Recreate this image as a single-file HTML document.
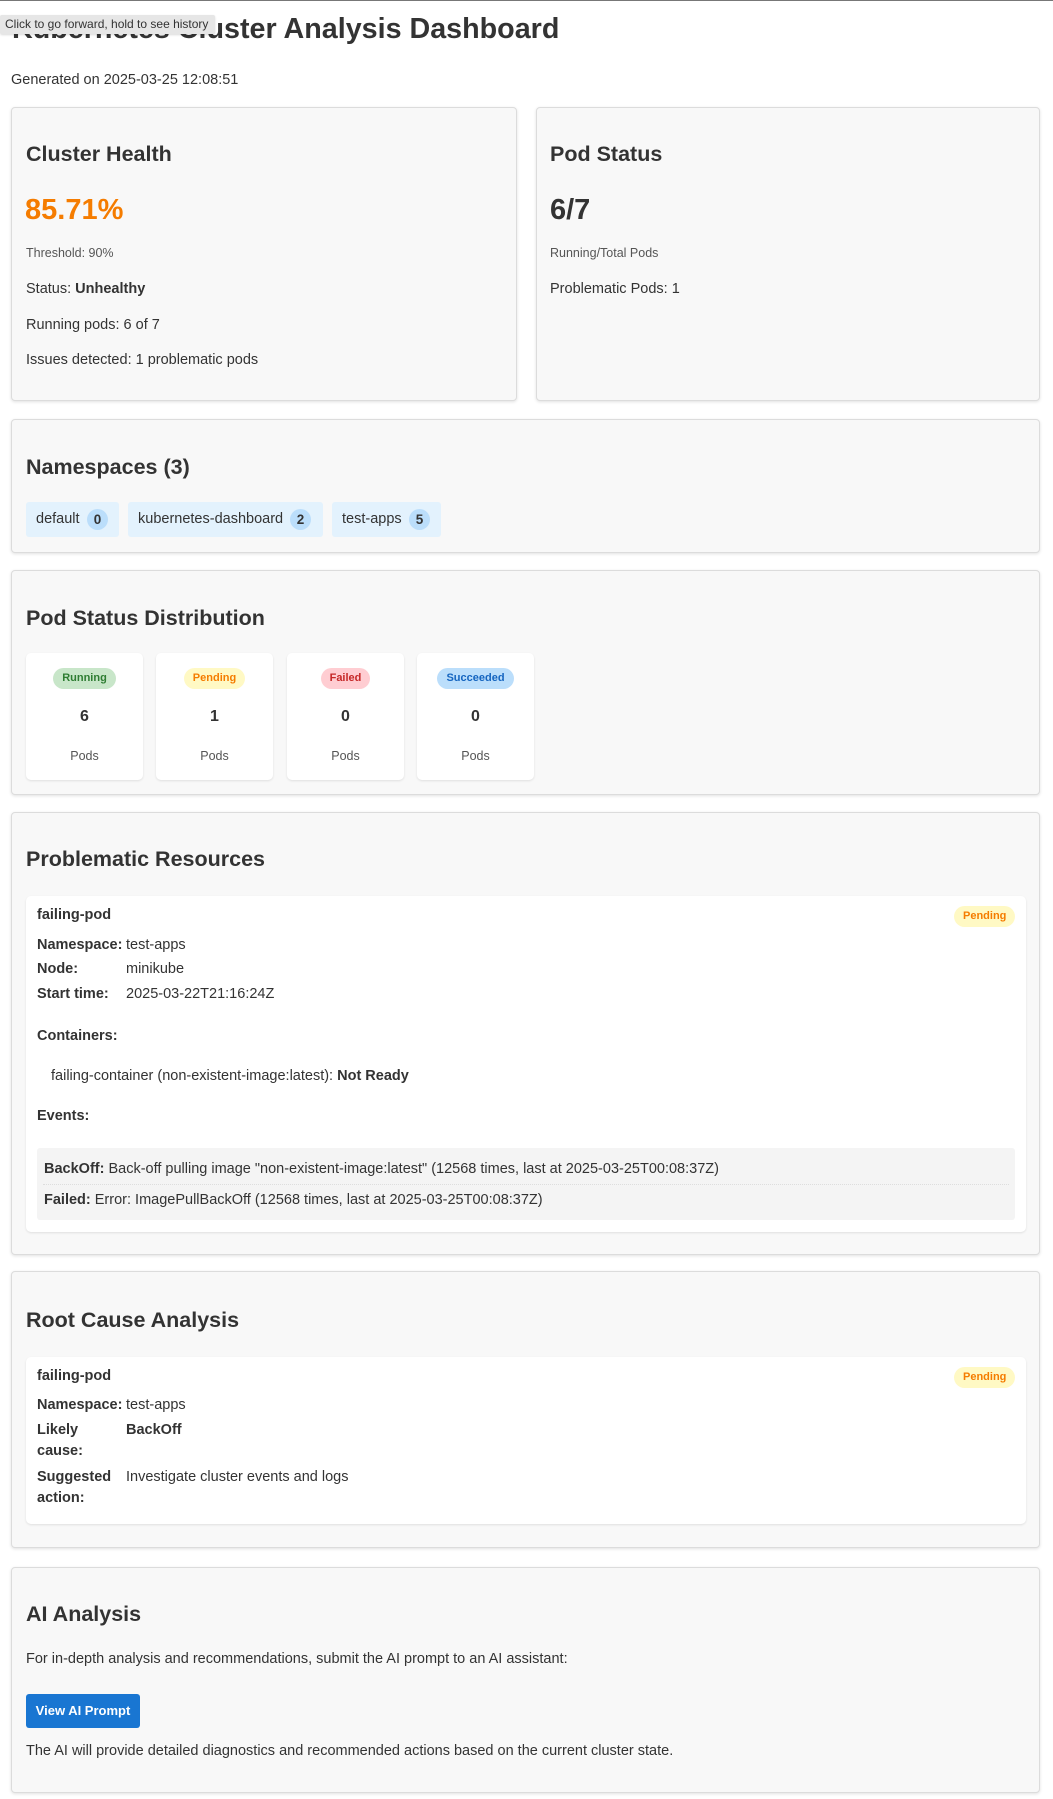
<!DOCTYPE html>
<html><head><meta charset="utf-8"><style>
*{box-sizing:border-box;margin:0;padding:0}
body{width:1053px;height:1799px;position:relative;background:#fff;font-family:"Liberation Sans",Arial,sans-serif;color:#333;font-size:14.5px;overflow:hidden}
.a{position:absolute;white-space:nowrap;line-height:20px}
.card{position:absolute;background:#f8f8f8;border:1px solid #dcdcdc;border-radius:4px;box-shadow:0 1px 3px rgba(0,0,0,.12)}
.in{position:absolute;background:#fff;border-radius:5px;box-shadow:0 1px 2px rgba(0,0,0,.1)}
h2{position:absolute;font-size:21.5px;font-weight:bold;line-height:26px;white-space:nowrap}
b{font-weight:bold}
.tag{position:absolute;top:502px;height:35px;background:#e3f2fd;border-radius:3px;line-height:35px;padding-left:10px;white-space:nowrap}
.cnt{position:absolute;top:7px;width:21px;height:21px;border-radius:50%;background:#bbdefb;font-weight:bold;text-align:center;line-height:21px;font-size:13.5px}
.box{position:absolute;top:653px;width:117px;height:127px;background:#fff;border-radius:5px;box-shadow:0 1px 2px rgba(0,0,0,.1);text-align:center}
.bd{display:inline-block;height:21px;line-height:21px;border-radius:11px;padding:0 9px;font-size:11px;font-weight:bold;margin-top:15px}
.num{position:absolute;left:0;right:0;top:54px;font-weight:bold;font-size:16px;line-height:20px}
.pods{position:absolute;left:0;right:0;top:93px;font-size:12.5px;color:#555;line-height:20px}
.pend{position:absolute;height:21px;line-height:21px;border-radius:11px;padding:0 9px;font-size:11px;font-weight:bold;background:#fff9c4;color:#f57c00}
</style></head><body>
<div style="position:absolute;left:0;top:0;width:1053px;height:1px;background:#777"></div>
<div class="a" style="left:12px;top:11px;font-size:28.7px;font-weight:bold;line-height:36px">Kubernetes Cluster Analysis Dashboard</div>
<div class="a" style="left:0;top:15px;width:215px;height:19px;background:#e6e6e6;border-radius:2px;font-size:12px;line-height:19px;padding-left:5px;color:#333;box-shadow:0 1px 2px rgba(0,0,0,.15)">Click to go forward, hold to see history</div>
<div class="a" style="left:11px;top:70px">Generated on 2025-03-25 12:08:51</div>

<div class="card" style="left:11px;top:107px;width:506px;height:294px"></div>
<h2 style="left:26px;top:141px">Cluster Health</h2>
<div class="a" style="left:25px;top:193px;font-size:29px;font-weight:bold;color:#f57c00;line-height:34px">85.71%</div>
<div class="a" style="left:26px;top:243px;font-size:12.5px;color:#555">Threshold: 90%</div>
<div class="a" style="left:26px;top:279px">Status: <b>Unhealthy</b></div>
<div class="a" style="left:26px;top:315px">Running pods: 6 of 7</div>
<div class="a" style="left:26px;top:350px">Issues detected: 1 problematic pods</div>

<div class="card" style="left:536px;top:107px;width:504px;height:294px"></div>
<h2 style="left:550px;top:141px">Pod Status</h2>
<div class="a" style="left:550px;top:193px;font-size:29px;font-weight:bold;line-height:34px">6/7</div>
<div class="a" style="left:550px;top:243px;font-size:12.5px;color:#555">Running/Total Pods</div>
<div class="a" style="left:550px;top:279px">Problematic Pods: 1</div>

<div class="card" style="left:11px;top:419px;width:1029px;height:134px"></div>
<h2 style="left:26px;top:454px">Namespaces (3)</h2>
<div class="tag" style="left:26px;width:93px">default<span class="cnt" style="left:61px">0</span></div>
<div class="tag" style="left:128px;width:195px">kubernetes-dashboard<span class="cnt" style="left:162px">2</span></div>
<div class="tag" style="left:332px;width:109px">test-apps<span class="cnt" style="left:77px">5</span></div>

<div class="card" style="left:11px;top:570px;width:1029px;height:225px"></div>
<h2 style="left:26px;top:605px">Pod Status Distribution</h2>
<div class="box" style="left:26px"><span class="bd" style="background:#c8e6c9;color:#2e7d32">Running</span><div class="num">6</div><div class="pods">Pods</div></div>
<div class="box" style="left:156px"><span class="bd" style="background:#fff9c4;color:#f57c00">Pending</span><div class="num">1</div><div class="pods">Pods</div></div>
<div class="box" style="left:287px"><span class="bd" style="background:#ffcdd2;color:#c62828">Failed</span><div class="num">0</div><div class="pods">Pods</div></div>
<div class="box" style="left:417px"><span class="bd" style="background:#bbdefb;color:#1565c0">Succeeded</span><div class="num">0</div><div class="pods">Pods</div></div>

<div class="card" style="left:11px;top:812px;width:1029px;height:443px"></div>
<h2 style="left:26px;top:846px">Problematic Resources</h2>
<div class="in" style="left:26px;top:896px;width:1000px;height:336px"></div>
<div class="a" style="left:37px;top:905px;font-weight:bold">failing-pod</div>
<div class="pend" style="left:954px;top:906px">Pending</div>
<div class="a" style="left:37px;top:935px;font-weight:bold">Namespace:</div><div class="a" style="left:126px;top:935px">test-apps</div>
<div class="a" style="left:37px;top:959px;font-weight:bold">Node:</div><div class="a" style="left:126px;top:959px">minikube</div>
<div class="a" style="left:37px;top:984px;font-weight:bold">Start time:</div><div class="a" style="left:126px;top:984px">2025-03-22T21:16:24Z</div>
<div class="a" style="left:37px;top:1026px;font-weight:bold">Containers:</div>
<div class="a" style="left:51px;top:1066px">failing-container (non-existent-image:latest): <b>Not Ready</b></div>
<div class="a" style="left:37px;top:1106px;font-weight:bold">Events:</div>
<div style="position:absolute;left:37px;top:1148px;width:978px;height:72px;background:#f4f4f4;border-radius:3px"></div>
<div style="position:absolute;left:43px;top:1184px;width:966px;border-top:1px dotted #ddd"></div>
<div class="a" style="left:44px;top:1159px"><b>BackOff:</b> Back-off pulling image "non-existent-image:latest" (12568 times, last at 2025-03-25T00:08:37Z)</div>
<div class="a" style="left:44px;top:1190px"><b>Failed:</b> Error: ImagePullBackOff (12568 times, last at 2025-03-25T00:08:37Z)</div>

<div class="card" style="left:11px;top:1271px;width:1029px;height:277px"></div>
<h2 style="left:26px;top:1307px">Root Cause Analysis</h2>
<div class="in" style="left:26px;top:1357px;width:1000px;height:167px"></div>
<div class="a" style="left:37px;top:1366px;font-weight:bold">failing-pod</div>
<div class="pend" style="left:954px;top:1367px">Pending</div>
<div class="a" style="left:37px;top:1395px;font-weight:bold">Namespace:</div><div class="a" style="left:126px;top:1395px">test-apps</div>
<div class="a" style="left:37px;top:1420px;font-weight:bold">Likely</div><div class="a" style="left:126px;top:1420px;font-weight:bold">BackOff</div>
<div class="a" style="left:37px;top:1441px;font-weight:bold">cause:</div>
<div class="a" style="left:37px;top:1467px;font-weight:bold">Suggested</div><div class="a" style="left:126px;top:1467px">Investigate cluster events and logs</div>
<div class="a" style="left:37px;top:1488px;font-weight:bold">action:</div>

<div class="card" style="left:11px;top:1567px;width:1029px;height:226px"></div>
<h2 style="left:26px;top:1601px">AI Analysis</h2>
<div class="a" style="left:26px;top:1649px">For in-depth analysis and recommendations, submit the AI prompt to an AI assistant:</div>
<div class="a" style="left:26px;top:1694px;width:114px;height:34px;background:#1976d2;border-radius:3px;color:#fff;font-size:13px;font-weight:bold;line-height:34px;text-align:center">View AI Prompt</div>
<div class="a" style="left:26px;top:1741px">The AI will provide detailed diagnostics and recommended actions based on the current cluster state.</div>
</body></html>
